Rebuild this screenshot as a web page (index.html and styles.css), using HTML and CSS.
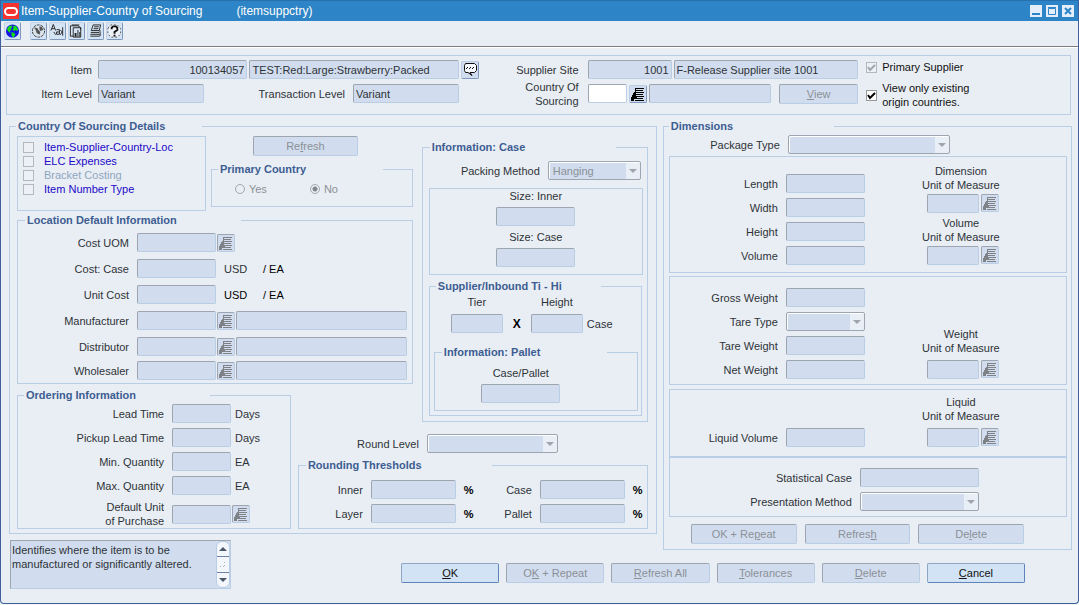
FILE: index.html
```html
<!DOCTYPE html>
<html lang="en">
<head>
  <meta charset="UTF-8">
  <meta name="viewport" content="width=device-width, initial-scale=1.0">
  <title>Item-Supplier-Country of Sourcing</title>
  <link rel="stylesheet" href="styles.css">
</head>
<body>

  <!-- shared icons -->
  <svg class="sprite" aria-hidden="true">
    <symbol id="ico-list" viewBox="0 0 16 16">
      <path d="M6 2.500h8M5 4.500h8M6 6.500h8M6 8.500h7M6 10.500h8M6 12.500h7M5 14.500h9M5.500 2v4" fill="none" stroke="currentColor"/>
      <path d="M4 6h2v5h1v2H4v2H1v-4h1V9h1V7h1z" fill="currentColor"/>
    </symbol>
  </svg>

  <div class="window">

    <!-- title bar -->
    <header class="titlebar">
      <svg class="logo" viewBox="0 0 16 16"><rect width="16" height="16" fill="#f5342f"/><rect x="2" y="5" width="12" height="7" rx="3.500" fill="none" stroke="#fff" stroke-width="2"/></svg>
      <h1>Item-Supplier-Country of Sourcing</h1>
      <span class="module">(itemsuppctry)</span>
      <div class="win_btns">
        <button type="button" aria-label="Minimize"><svg viewBox="0 0 12 12"><path d="M2 9h8" stroke="#2d84c6" stroke-width="2"/></svg></button>
        <button type="button" aria-label="Maximize"><svg viewBox="0 0 12 12"><path d="M2.500 3.500h7v6h-7zM2 2.500h8" fill="none" stroke="#2d84c6"/></svg></button>
        <button type="button" aria-label="Close"><svg viewBox="0 0 12 12"><path d="M3 3l6 6M9 3l-6 6" stroke="#2d84c6" stroke-width="2"/></svg></button>
      </div>
    </header>

    <!-- toolbar -->
    <nav class="toolbar">
      <button type="button" class="tool first" aria-label="World"><svg viewBox="0 0 16 16"><circle cx="8" cy="8" r="7" fill="#1414e6"/><path d="M2 6l2-3 3-1 1 2-2 1 1 2-2 1 1 2-2-1zM9 2l3 1 2 3-1 2-2-1-1 1-2-1 1-2zM7 9l3 1 1 2-2 3-2-2z" fill="#12e012"/></svg></button>
      <button type="button" class="tool" aria-label="Currency"><svg viewBox="0 0 16 16"><circle cx="8" cy="8" r="6.500" fill="#dbe3ec" stroke="#333" stroke-dasharray="3 1"/><path d="M3 4l4 1 1 2 2 2-1 3-3-2-1-3zM9 3l3 1 1 3-3 1-1-2z" fill="#555"/></svg></button>
      <button type="button" class="tool" aria-label="Translate"><svg viewBox="0 0 16 16"><path d="M1 7.500L3.500 1 6 7.500M2 5.500h3M7 6.500h3v5H7v-2.500h3M13.500 4v9M11 7l2 2-2 3M4 9l2 3" fill="none" stroke="#222"/></svg></button>
      <button type="button" class="tool" aria-label="Report"><svg viewBox="0 0 16 16"><path d="M1.500 2.500h8l3 2v2M1.500 2.500v11h3M4.500 4.500h8v10h-8z" fill="none" stroke="#222"/><path d="M6 10h2v4H6zM9 7h1v7H9zM11 9h1v5h-1zM3 1h8v1H3z" fill="#222"/></svg></button>
      <button type="button" class="tool" aria-label="Documents"><svg viewBox="0 0 16 16"><path d="M5.500 1.500h8l-1.500 6H3.500zM3 9.500h9l1.500-2M2.500 11.500h10l1-2M2.500 13.500h10l1-2M6.500 3.500h5M6 5.500h5" fill="none" stroke="#222"/></svg></button>
      <button type="button" class="tool" aria-label="Help"><svg viewBox="0 0 16 16"><path d="M1 5l3-3.500h7L14.500 5v6l-3 3.500H4L1 11z" fill="#edf2f7" stroke="#555" stroke-dasharray="2 2"/><path d="M5 6V4.500L6.500 3h3L11 4.500V7L8 9v2" fill="none" stroke="#111" stroke-width="2"/><path d="M7 12h2v2H7z" fill="#111"/></svg></button>
    </nav>

    <!-- item header -->
    <section class="box item_head">
      <div class="head_item">
        <div class="row">
          <label for="item">Item</label>
          <input id="item" class="w3 num" value="100134057" readonly>
          <input class="w4" value="TEST:Red:Large:Strawberry:Packed" aria-label="Item description" readonly>
          <button type="button" class="lov" aria-label="Comments"><svg viewBox="0 0 16 16"><path d="M3.500 1.500h9l2 2v5l-2 2H8l2 3-4-3H3.500l-1-2v-5z" fill="#f4f8fc" stroke="#111"/><path d="M5 5h1v1H5zM8 5h1v1H8zM11 5h1v1h-1zM4 6h1v1H4zM7 6h1v1H7zM10 6h1v1h-1z" fill="#111"/></svg></button>
        </div>
        <div class="row levels">
          <label for="level">Item Level</label>
          <input id="level" value="Variant" readonly>
          <label for="tran" class="tran">Transaction Level</label>
          <input id="tran" value="Variant" readonly>
        </div>
      </div>
      <div class="head_site">
        <div class="row">
          <label for="site">Supplier Site</label>
          <input id="site" class="site_no num" value="1001" readonly>
          <input class="grow" value="F-Release Supplier site 1001" aria-label="Site name" readonly>
        </div>
        <div class="row">
          <label for="country">Country Of<br>Sourcing</label>
          <input id="country" class="code on">
          <button type="button" class="lov" aria-label="List countries"><svg><use href="#ico-list"/></svg></button>
          <input class="grow" aria-label="Country name" readonly>
          <button type="button" class="btn view" disabled><u>V</u>iew</button>
        </div>
      </div>
      <div class="head_opts">
        <label><input type="checkbox" checked disabled>Primary Supplier</label>
        <label><input type="checkbox" class="live" checked><span>View only existing<br>origin countries.</span></label>
      </div>
    </section>

    <main>
      <!-- country of sourcing -->
      <fieldset class="sourcing">
        <legend class="lg_wide">Country Of Sourcing Details</legend>

        <div class="overview">
          <div class="top_pair">
            <div class="box links">
              <label><input type="checkbox" disabled>Item-Supplier-Country-Loc</label>
              <label><input type="checkbox" disabled>ELC Expenses</label>
              <label class="off"><input type="checkbox" disabled>Bracket Costing</label>
              <label><input type="checkbox" disabled>Item Number Type</label>
            </div>
            <div class="primary_side">
              <button type="button" class="btn" disabled>Re<u>f</u>resh</button>
              <fieldset class="primary">
                <legend class="lg">Primary Country</legend>
                <div class="radios">
                  <label><input type="radio" name="primary" disabled>Yes</label>
                  <label><input type="radio" name="primary" checked disabled>No</label>
                </div>
              </fieldset>
            </div>
          </div>

          <fieldset class="location">
            <legend class="lg_xwide">Location Default Information</legend>
            <div class="row">
              <label for="uom">Cost UOM</label><input id="uom" class="md" disabled>
              <button type="button" class="lov" aria-label="List units" disabled><svg><use href="#ico-list"/></svg></button>
            </div>
            <div class="row"><label for="ccase">Cost: Case</label><input id="ccase" class="md" disabled><span class="cur">USD</span><span class="per">/ EA</span></div>
            <div class="row"><label for="ucost">Unit Cost</label><input id="ucost" class="md" disabled><span class="cur dark">USD</span><span class="per">/ EA</span></div>
            <div class="row">
              <label for="manu">Manufacturer</label><input id="manu" class="md" disabled>
              <button type="button" class="lov" aria-label="List manufacturers" disabled><svg><use href="#ico-list"/></svg></button>
              <input class="grow" aria-label="Manufacturer name" disabled>
            </div>
            <div class="tight">
              <div class="row">
                <label for="dist">Distributor</label><input id="dist" class="md" disabled>
                <button type="button" class="lov" aria-label="List distributors" disabled><svg><use href="#ico-list"/></svg></button>
                <input class="grow" aria-label="Distributor name" disabled>
              </div>
              <div class="row">
                <label for="whole">Wholesaler</label><input id="whole" class="md" disabled>
                <button type="button" class="lov" aria-label="List wholesalers" disabled><svg><use href="#ico-list"/></svg></button>
                <input class="grow" aria-label="Wholesaler name" disabled>
              </div>
            </div>
          </fieldset>
        </div>

        <!-- ordering -->
        <fieldset class="ordering">
          <legend class="lg_wide">Ordering Information</legend>
          <div class="row"><label for="lead">Lead Time</label><input id="lead" disabled><span>Days</span></div>
          <div class="row"><label for="pickup">Pickup Lead Time</label><input id="pickup" disabled><span>Days</span></div>
          <div class="row"><label for="minq">Min. Quantity</label><input id="minq" disabled><span>EA</span></div>
          <div class="row"><label for="maxq">Max. Quantity</label><input id="maxq" disabled><span>EA</span></div>
          <div class="row">
            <label for="duop">Default Unit<br>of Purchase</label><input id="duop" disabled>
            <button type="button" class="lov" aria-label="List purchase units" disabled><svg><use href="#ico-list"/></svg></button>
          </div>
        </fieldset>

        <!-- case / pallet -->
        <fieldset class="case_info">
          <legend class="lg_wide">Information: Case</legend>
          <div class="row packing">
            <label for="pack">Packing Method</label>
            <select id="pack" disabled><option>Hanging</option></select>
          </div>
          <div class="box sizes">
            <label for="sin">Size: Inner</label><input id="sin" class="md" disabled>
            <label for="sca">Size: Case</label><input id="sca" class="md" disabled>
          </div>
          <fieldset class="tihi">
            <legend class="lg">Supplier/Inbound Ti - Hi</legend>
            <div class="tihi_row">
              <div class="stack"><label for="tier">Tier</label><input id="tier" class="sm" disabled></div>
              <b>X</b>
              <div class="stack"><label for="hi">Height</label><input id="hi" class="sm" disabled></div>
              <span>Case</span>
            </div>
            <fieldset class="pallet">
              <legend class="lg">Information: Pallet</legend>
              <div class="pallet_row"><label for="cpal">Case/Pallet</label><input id="cpal" class="md" disabled></div>
            </fieldset>
          </fieldset>
        </fieldset>

        <!-- rounding -->
        <div class="rounding">
          <div class="row round_level">
            <label for="rlevel">Round Level</label>
            <select id="rlevel" disabled><option></option></select>
          </div>
          <fieldset>
            <legend class="lg_wide">Rounding Thresholds</legend>
            <div class="thresholds">
              <label for="rin">Inner</label><input id="rin" disabled><b>%</b>
              <label for="rca">Case</label><input id="rca" disabled><b>%</b>
              <label for="rla">Layer</label><input id="rla" disabled><b>%</b>
              <label for="rpa">Pallet</label><input id="rpa" disabled><b>%</b>
            </div>
          </fieldset>
        </div>
      </fieldset>

      <!-- dimensions -->
      <fieldset class="dimensions">
        <legend class="lg">Dimensions</legend>
        <div class="row package">
          <label for="ptype">Package Type</label>
          <select id="ptype" disabled><option></option></select>
        </div>

        <div class="box measure b1">
          <div class="fields">
            <div class="row"><label for="len">Length</label><input id="len" class="md" disabled></div>
            <div class="row"><label for="wid">Width</label><input id="wid" class="md" disabled></div>
            <div class="row"><label for="hei">Height</label><input id="hei" class="md" disabled></div>
            <div class="row"><label for="vol">Volume</label><input id="vol" class="md" disabled></div>
          </div>
          <div class="uoms">
            <label for="duom">Dimension<br>Unit of Measure</label>
            <div class="pick"><input id="duom" class="sm" disabled><button type="button" class="lov" aria-label="List dimension units" disabled><svg><use href="#ico-list"/></svg></button></div>
            <label for="vuom">Volume<br>Unit of Measure</label>
            <div class="pick"><input id="vuom" class="sm" disabled><button type="button" class="lov" aria-label="List volume units" disabled><svg><use href="#ico-list"/></svg></button></div>
          </div>
        </div>

        <div class="box measure b2">
          <div class="fields">
            <div class="row"><label for="gross">Gross Weight</label><input id="gross" class="md" disabled></div>
            <div class="row"><label for="ttype">Tare Type</label><select id="ttype" class="md" disabled><option></option></select></div>
            <div class="row"><label for="tare">Tare Weight</label><input id="tare" class="md" disabled></div>
            <div class="row"><label for="net">Net Weight</label><input id="net" class="md" disabled></div>
          </div>
          <div class="uoms loose">
            <label for="wuom">Weight<br>Unit of Measure</label>
            <div class="pick"><input id="wuom" class="sm" disabled><button type="button" class="lov" aria-label="List weight units" disabled><svg><use href="#ico-list"/></svg></button></div>
          </div>
        </div>

        <div class="box measure b3">
          <div class="fields">
            <div class="row"><label for="liq">Liquid Volume</label><input id="liq" class="md" disabled></div>
          </div>
          <div class="uoms loose">
            <label for="luom">Liquid<br>Unit of Measure</label>
            <div class="pick"><input id="luom" class="sm" disabled><button type="button" class="lov" aria-label="List liquid units" disabled><svg><use href="#ico-list"/></svg></button></div>
          </div>
        </div>

        <div class="box stats">
          <div class="row"><label for="scase">Statistical Case</label><input id="scase" disabled></div>
          <div class="row"><label for="pres">Presentation Method</label><select id="pres" disabled><option></option></select></div>
        </div>

        <div class="dim_btns">
          <button type="button" class="btn" disabled>OK + Re<u>p</u>eat</button>
          <button type="button" class="btn" disabled>Refres<u>h</u></button>
          <button type="button" class="btn" disabled>De<u>l</u>ete</button>
        </div>
      </fieldset>
    </main>

    <!-- hint and actions -->
    <footer>
      <div class="hint">
        <textarea aria-label="Hint" readonly>Identifies where the item is to be manufactured or significantly altered.</textarea>
        <div class="scroll">
          <button type="button" aria-label="Scroll up"><svg viewBox="0 0 12 12"><path d="M6 4l4 4H2z"/></svg></button>
          <span class="thumb"><svg viewBox="0 0 12 12"><path d="M3 9l1-1M7 5l1-1M6 9l2-2"/></svg></span>
          <button type="button" aria-label="Scroll down"><svg viewBox="0 0 12 12"><path d="M6 8L2 4h8z"/></svg></button>
        </div>
      </div>
      <div class="actions">
        <button type="button" class="btn on"><u>O</u>K</button>
        <button type="button" class="btn" disabled>O<u>K</u> + Repeat</button>
        <button type="button" class="btn" disabled><u>R</u>efresh All</button>
        <button type="button" class="btn" disabled><u>T</u>olerances</button>
        <button type="button" class="btn" disabled><u>D</u>elete</button>
        <button type="button" class="btn on"><u>C</u>ancel</button>
      </div>
    </footer>
  </div>

</body>
</html>
```
FILE: styles.css
```css
:root {
    --font: "Liberation Sans", Arial, Helvetica, sans-serif;
    --bg: #e9eef4;
    --line: #b9cde4;
    --field: #d1ddee;
    --shade: #9da5b1;
    --title: #3d5d92;
    --text: #2e3338;
    --off: #8b9097;
}

* {box-sizing: border-box;}
body {margin: 0; background: #f1f8f8; font: 11px/14px var(--font); color: var(--text);}
.sprite {display: none;}

.window {background: var(--bg); border: 1px solid #3d5f9b; border-top: 0; border-radius: 0 0 4px 4px; min-height: calc(100vh - 1px); padding-bottom: 14px;}

/* title bar */
.titlebar {display: flex; align-items: center; height: 21px; padding: 0 4px 0 2px; background: #2d84c6; border-top: 1px solid #2670ae; color: #fff; font-size: 12px;}
.titlebar h1 {margin: 0 0 0 2px; font-size: 12px; font-weight: normal;}
.logo {width: 16px; height: 16px;}
.module {margin-left: 34px;}
.win_btns {display: flex; gap: 4px; margin-left: auto;}
.win_btns button {width: 12px; height: 12px; padding: 0; border: 0; background: #e3eefa;}
.win_btns svg {display: block;}

/* toolbar */
.toolbar {display: flex; gap: 2px; height: 26px; padding: 1px 3px; border-bottom: 1px solid #7b7f85; box-shadow: 0 1px 0 #fff;}
.tool {width: 17px; height: 18px; padding: 0; border: 1px solid; border-color: #c3d4e8 #7d98bb #7d98bb #c3d4e8; border-radius: 2px; background: #d5e4f4;}
.tool svg {display: block; width: 15px; height: 16px;}
.tool.first {margin-right: 7px;}

/* form pieces */
fieldset {min-width: 0; margin: 0; padding: 0; border: 1px solid var(--line);}
legend {margin-left: 7px; padding: 0 2px; color: var(--title); font-weight: bold;}
.lg {min-width: 165px;}
.lg_wide {min-width: 186px;}
.lg_xwide {min-width: 216px;}
.box {border: 1px solid var(--line);}
.row {display: flex; align-items: center; gap: 1px;}
.row > label:first-child {flex: none; padding-right: 7px; text-align: right;}
.grow {flex: 1;}
input, select, textarea, button {font: inherit; color: inherit;}
input:not([type]), select {min-width: 0; height: 19px; margin: 0; padding: 0 2px; border: 1px solid; border-color: var(--shade) var(--line) var(--line) var(--shade); border-radius: 2px; background: var(--field);}
input.on {background: #fff;}
input.num {text-align: right;}
.md {width: 79px;}
.sm {width: 52px;}
select {appearance: none; border-color: var(--shade); box-shadow: inset 1px 1px 0 #fff; opacity: 1; padding-left: 4px; color: var(--off);
    background: url("data:image/svg+xml,%3Csvg xmlns='http://www.w3.org/2000/svg' width='14' height='17'%3E%3Crect width='14' height='17' fill='%23e9eff6'/%3E%3Cpath d='M3 7h8l-4 4z' fill='%23a0a4ab'/%3E%3C/svg%3E") no-repeat right center var(--field);}
.lov {flex: none; width: 18px; height: 18px; padding: 0; border: 1px solid; border-color: var(--line) #7d98bb #7d98bb var(--line); border-radius: 2px; background: var(--field); color: #000;}
.lov svg {display: block; width: 16px; height: 16px;}
.lov:disabled {border-color: var(--shade) var(--line) var(--line) var(--shade); color: #7e8185;}
.btn {height: 20px; padding: 0; border: 1px solid; border-color: var(--shade) var(--line) var(--line) var(--shade); border-radius: 2px; background: var(--field); color: var(--off);}
.btn.on {border-color: #8ea6c4 #5f84b8 #5f84b8 #8ea6c4; background: #d2e3f5; color: #111;}

input[type="checkbox"] {appearance: none; flex: none; width: 11px; height: 11px; margin: 0; border: 1px solid #b3b8bf; background: #edf1f5;}
input[type="checkbox"]:checked {background: url("data:image/svg+xml,%3Csvg xmlns='http://www.w3.org/2000/svg' viewBox='0 0 9 9'%3E%3Cpath d='M1 4l2 3 5-5' fill='none' stroke='%23a0a4ab' stroke-width='2'/%3E%3C/svg%3E") #edf1f5;}
input[type="checkbox"].live:checked {border-color: #999; background: url("data:image/svg+xml,%3Csvg xmlns='http://www.w3.org/2000/svg' viewBox='0 0 9 9'%3E%3Cpath d='M1 4l2 3 5-5' fill='none' stroke='%23000' stroke-width='2'/%3E%3C/svg%3E") #fff;}
input[type="radio"] {appearance: none; width: 10px; height: 10px; margin: 0; border: 1px solid #a3a8ae; border-radius: 50%;}
input[type="radio"]:checked {background: radial-gradient(circle, #83888e 2px, transparent 3px);}

/* item header */
.item_head {display: grid; grid-template-columns: minmax(0, 472fr) minmax(0, 380fr) minmax(0, 212fr); margin: 8px 7px 0 5px; height: 60px; padding-top: 4px;}
.head_item, .head_site {display: flex; flex-direction: column; gap: 5px;}
.head_item .row > label:first-child {width: 89px; padding-right: 4px;}
.item_head .row {gap: 2px;}
.w3 {flex: 149 1 0;}
.w4 {flex: 211 1 0;}
.levels {padding-right: 20px;}
.levels input {flex: 105 1 0;}
.levels .tran {flex: 147 1 0; padding-right: 6px; text-align: right;}
.head_site .row {height: 19px;}
.head_site .row > label:first-child {width: 107px;}
.site_no {width: 84px;}
.code {width: 39px;}
.view {width: 79px; margin-left: 6px;}
.head_opts {padding-left: 8px; color: #111;}
.head_opts label {display: flex; align-items: center; gap: 5px; margin-bottom: 7px;}

/* two main panels */
main {display: grid; grid-template-columns: minmax(0, 649fr) minmax(0, 410fr); gap: 6px; align-items: start; margin: 4px 6px 0 8px;}

.sourcing {display: grid; grid-template-columns: minmax(0, 274fr) minmax(0, 117fr) minmax(0, 226fr); grid-template-rows: auto 38px auto; column-gap: 7px; padding: 0 8px 4px 7px;}
.sourcing > legend {margin-left: -1px;}
.overview {grid-area: 1 / 1 / 2 / 3; padding: 3px 2px 4px 0;}
.ordering {grid-area: 2 / 1 / 4 / 2;}
.case_info {grid-area: 1 / 3 / 3 / 4; margin: 7px 0 4px;}
.rounding {grid-area: 3 / 2 / 4 / 4;}

.top_pair {display: grid; grid-template-columns: minmax(0, 189fr) minmax(0, 202fr); gap: 5px;}
.links {height: 75px; padding: 3px 5px; color: #2208c8;}
.links label {display: flex; align-items: center; gap: 10px;}
.links .off {color: #8fa5c0;}
.primary_side .btn {display: block; width: 105px; margin: 0 auto 6px 42px;}
.primary > legend {margin-left: 6px;}
.primary {height: 45px;}
.radios {display: flex; gap: 43px; padding: 6px 23px; color: var(--off);}
.radios label {display: flex; align-items: center; gap: 4px;}

.location {display: flex; flex-direction: column; gap: 7px; margin-top: 2px; padding: 6px 5px 3px 0;}
.location .row, .ordering .row {min-height: 19px;}
.location .row > label:first-child {width: 118px;}
.tight {display: flex; flex-direction: column; gap: 5px;}
.cur {width: 38px; margin-left: 7px;}
.dark, .per {color: #000;}

.ordering {display: flex; flex-direction: column; gap: 5px; padding: 2px 5px 0 0;}
.ordering > legend {margin-left: 6px;}
.ordering .row > label:first-child {width: 153px;}
.ordering input {width: 59px;}
.ordering span {padding-left: 3px;}

.packing {justify-content: flex-end; padding: 7px 6px 8px 0;}
.packing select {width: 93px;}
.sizes {display: flex; flex-direction: column; align-items: center; height: 87px; margin: 0 4px 4px 6px; gap: 4px;}
.tihi {margin: 0 5px 5px 6px; padding: 2px 3px 4px 4px;}
.tihi > legend {margin-left: 2px;}
.tihi_row {display: flex; align-items: flex-end; gap: 4px; padding-left: 17px;}
.tihi_row b {width: 20px; font-size: 12px; text-align: center; color: #000; line-height: 18px;}
.tihi_row span {line-height: 18px;}
.stack {display: flex; flex-direction: column; align-items: center; gap: 5px;}
.pallet {margin-top: 12px;}
.pallet_row {display: flex; flex-direction: column; align-items: center; gap: 4px; padding: 7px 30px 7px 0;}

.rounding {padding-top: 8px;}
.round_level > label:first-child {width: 128px;}
.round_level select {width: 131px;}
.rounding fieldset {margin-top: 5px;}
.thresholds {display: grid; grid-template-columns: 64px 1fr 10px 50px 1fr 14px; gap: 5px 8px; align-items: center; padding: 8px 0 5px;}
.thresholds label {text-align: right;}
.thresholds b {color: #000;}

/* dimensions */
.dimensions {padding: 2px 4px 5px 5px;}
.dimensions > legend {margin-left: 0;}
.package {padding-bottom: 2px;}
.package > label:first-child {width: 118px;}
.package select {width: 162px;}
.measure {display: grid; grid-template-columns: minmax(0, 236fr) minmax(0, 160fr); align-items: end;}
.b1 {height: 117px; padding-bottom: 7px; margin-bottom: 3px;}
.b2 {height: 109px; padding-bottom: 5px; margin-bottom: 4px;}
.b3 {height: 68px; padding-bottom: 9px;}
.fields {display: flex; flex-direction: column; gap: 5px;}
.fields .row > label:first-child {width: 115px;}
.uoms {width: 110px; text-align: center;}
.uoms label {display: block; margin-bottom: 2px;}
.uoms.loose label {margin-bottom: 5px;}
.pick {display: flex; gap: 2px; justify-content: center; margin-bottom: 3px; padding-left: 4px;}
.pick:last-child {margin-bottom: 0;}
.stats {display: flex; flex-direction: column; gap: 5px; height: 60px; padding-top: 10px;}
.stats .row > label:first-child {width: 189px;}
.stats input, .stats select {width: 119px;}
.dim_btns {display: flex; gap: 8px; padding: 7px 43px 0 22px;}
.dim_btns .btn {flex: 1;}

footer {display: flex; justify-content: space-between; align-items: flex-end; margin: -10px 53px 0 9px;}
.hint {display: flex; width: 221px; height: 49px; border: 1px solid; border-color: var(--shade) var(--line) var(--line) var(--shade); background: var(--field);}
.hint textarea {flex: 1; min-width: 0; padding: 2px 1px; border: 0; background: none; resize: none; overflow: hidden;}
.scroll {display: flex; flex-direction: column; width: 14px; border: 1px solid var(--line); border-radius: 6px; background: #f3f7fb; overflow: hidden;}
.scroll button, .thumb {flex: 1; display: flex; align-items: center; padding: 0; border: 0; background: none;}
.scroll svg {width: 12px; height: 12px; fill: #4c566b;}
.thumb {border: solid #6d83a6; border-width: 1px 0;}
.thumb svg {fill: none; stroke: #a9b6c8;}
.actions {display: flex; gap: 7px; width: 624px; margin-bottom: 6px;}
.actions .btn {flex: 1;}
```
